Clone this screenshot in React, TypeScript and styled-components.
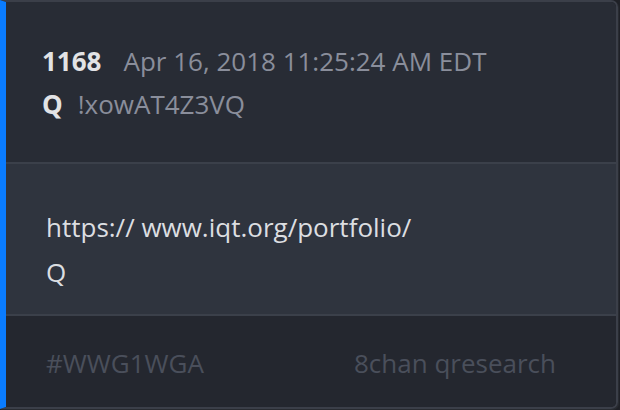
import React from "react";
import styled, { createGlobalStyle } from "styled-components";

const Global = createGlobalStyle`
  html, body { margin: 0; padding: 0; background: #1f2127; }
  body { font-family: "Open Sans", "Noto Sans", sans-serif; }
  #root { width: 620px; height: 410px; }
`;

const Card = styled.article`
  box-sizing: border-box;
  width: 618px;
  height: 409px;
  display: flex;
  flex-direction: column;
  border: 2px solid #3b3f49;
  border-left: 6px solid #0a7cff;
  border-radius: 0 7px 7px 0;
  overflow: hidden;
  box-shadow: 1px 1px 1px #2a2d33;
`;

const Header = styled.header`
  height: 162px;
  box-sizing: border-box;
  padding: 38px 0 0 36px;
  background: #282c35;
  border-bottom: 2px solid #3b404a;
  font-size: 26px;
  line-height: 43px;
`;

const Line = styled.div`
  display: flex;
  align-items: baseline;
  white-space: nowrap;
`;

const Strong = styled.span`
  font-weight: 700;
  color: #e2e3e5;
`;

const Muted = styled.span<{ $gap: number }>`
  color: #8a8e9b;
  margin-left: ${(p) => p.$gap}px;
`;

const Body = styled.section`
  flex: 1;
  box-sizing: border-box;
  padding: 41px 0 0 40px;
  background: #2f343e;
  border-bottom: 2px solid #3b404a;
  color: #dcdee1;
  font-size: 26px;
  line-height: 45px;
`;

const Footer = styled.footer`
  height: 91px;
  box-sizing: border-box;
  padding: 3px 0 0 40px;
  background: #24272f;
  display: grid;
  grid-template-columns: 308px auto;
  align-items: center;
  color: #4a4f5b;
  font-size: 26px;
`;

export default function App() {
  return (
    <>
      <Global />
      <Card>
        <Header>
          <Line>
            <Strong>1168</Strong>
            <Muted $gap={22}>Apr 16, 2018 11:25:24 AM EDT</Muted>
          </Line>
          <Line>
            <Strong>Q</Strong>
            <Muted $gap={15}>!xowAT4Z3VQ</Muted>
          </Line>
        </Header>
        <Body>
          <div>https:// www.iqt.org/portfolio/</div>
          <div>Q</div>
        </Body>
        <Footer>
          <span>#WWG1WGA</span>
          <span>8chan qresearch</span>
        </Footer>
      </Card>
    </>
  );
}
